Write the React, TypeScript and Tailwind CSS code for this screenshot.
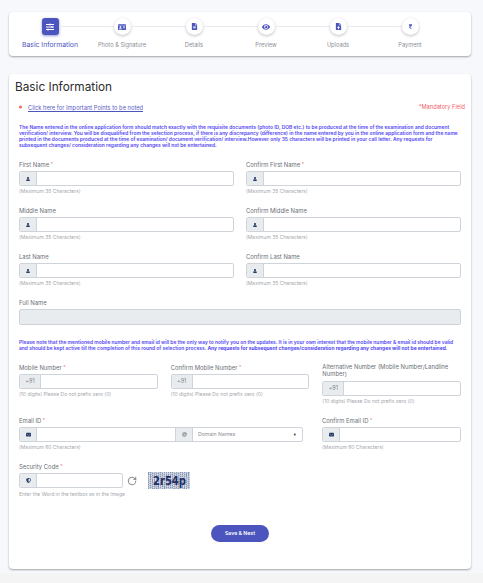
import { FaAt, FaEnvelope, FaEye, FaFileAlt, FaFileUpload, FaIdCard, FaRupeeSign, FaShieldAlt, FaSlidersH, FaUser } from "react-icons/fa";
import { RotateCw } from "lucide-react";
import type { ReactNode } from "react";

const steps = [
  { label: "Photo & Signature", icon: <FaIdCard className="w-[8px] h-[8px]" /> },
  { label: "Details", icon: <FaFileAlt className="w-[7px] h-[7px]" /> },
  { label: "Preview", icon: <FaEye className="w-[8px] h-[8px]" /> },
  { label: "Uploads", icon: <FaFileUpload className="w-[7px] h-[7px]" /> },
  { label: "Payment", icon: <FaRupeeSign className="w-[5px] h-[5px]" /> },
];

const Addon = ({ children, w = "w-[17px]" }: { children: ReactNode; w?: string }) => (
  <div className={`${w} shrink-0 h-full flex items-center justify-center bg-[#e9ecef] border-r border-[#ced4da] text-[#263a66] rounded-l-[2px]`}>
    {children}
  </div>
);

const Box = ({ children, className = "" }: { children?: ReactNode; className?: string }) => (
  <div className={`h-[15px] flex bg-white border border-[#ced4da] rounded-[2px] overflow-hidden ${className}`}>
    {children}
  </div>
);

const Label = ({ text, req }: { text: string; req?: boolean }) => (
  <div className="h-[9px] mb-[2px] text-[5.9px] leading-[9px] text-[#6b6f76]">
    {text}
    {req && <span className="text-[4.5px] text-[#f0524f] relative -top-[1.5px] ml-[1.5px]">*</span>}
  </div>
);

const Hint = ({ text }: { text: string }) => (
  <div className="mt-[2px] h-[7px] text-[5px] leading-[7px] text-[#a5a8ad]">{text}</div>
);

const NameField = ({ label, req }: { label: string; req?: boolean }) => (
  <div>
    <Label text={label} req={req} />
    <Box>
      <Addon>
        <FaUser className="w-[4px] h-[4px]" />
      </Addon>
    </Box>
    <Hint text="(Maximum 35 Characters)" />
  </div>
);

const PhoneField = ({ label, req }: { label: ReactNode; req?: boolean }) => (
  <div>
    {typeof label === "string" ? (
      <Label text={label} req={req} />
    ) : (
      <div className="h-[16px] mb-[2px] text-[5.9px] leading-[7px] text-[#6b6f76]">{label}</div>
    )}
    <Box>
      <Addon w="w-[21px]">
        <span className="text-[5.5px] text-[#80858c]">+91</span>
      </Addon>
    </Box>
    <Hint text="(10 digits) Please Do not prefix zero (0)" />
  </div>
);

// captcha noise, fixed seed so the picture stays the same
const noise = Array.from({ length: 420 }, (_, i) => ({
  x: (i * 37) % 42,
  y: (i * 13 + ((i * i) % 7)) % 17,
  dark: i % 2 === 0,
}));

const Captcha = () => (
  <svg width="42" height="17" viewBox="0 0 42 17" className="shrink-0">
    <rect width="42" height="17" fill="#b9c2d4" />
    {noise.map((d, i) => (
      <rect key={i} x={d.x} y={d.y} width="0.8" height="0.8" fill={d.dark ? "#6f7fa3" : "#e6e9f0"} />
    ))}
    <text x="5" y="13" fontFamily="'DejaVu Sans', sans-serif" fontWeight="700" fontSize="11.5" fill="#1f2f66" textLength="33" lengthAdjust="spacingAndGlyphs">
      2r54p
    </text>
  </svg>
);

export default function App() {
  return (
    <div className="h-[583px] overflow-hidden bg-[#f4f4f4] font-['Inter','Liberation_Sans',sans-serif]">
      <div className="h-[573px] bg-[#f6f8fb] pt-[12px] pl-[9px] pr-[12px]">
        {/* stepper */}
        <div className="h-[44px] bg-white rounded-[4px] shadow-[0_1px_2px_rgba(0,0,0,0.35)] pl-[5px] pt-[6px] flex">
          <div className="w-[72px] flex flex-col items-center">
            <div className="w-full h-[17px] flex items-center">
              <div className="flex-1" />
              <div className="w-[17px] h-[17px] rounded-[3px] bg-[#4b55bd] text-white flex items-center justify-center shadow-[0_1px_3px_rgba(75,85,189,0.6)]">
                <FaSlidersH className="w-[8px] h-[8px]" />
              </div>
              <div className="flex-1 h-px bg-[#e9ebef]" />
            </div>
            <div className="mt-[5px] text-[6.8px] leading-[9px] text-[#4b55bd] whitespace-nowrap">Basic Information</div>
          </div>
          {steps.map((s, i) => (
            <div key={s.label} className="w-[72px] flex flex-col items-center">
              <div className="w-full h-[17px] flex items-center">
                <div className="flex-1 h-px bg-[#e9ebef]" />
                <div className="w-[17px] h-[17px] rounded-full bg-white text-[#4b55bd] flex items-center justify-center shadow-[0_1px_3px_rgba(0,0,0,0.25)]">
                  {s.icon}
                </div>
                <div className={`flex-1 h-px ${i < steps.length - 1 ? "bg-[#e9ebef]" : ""}`} />
              </div>
              <div className="mt-[5px] text-[5.7px] leading-[9px] text-[#8d9096] whitespace-nowrap">{s.label}</div>
            </div>
          ))}
        </div>

        {/* form */}
        <div className="mt-[18px] h-[495px] bg-white rounded-[4px] shadow-[0_1px_2px_rgba(0,0,0,0.35)] px-[10px]">
          <h1 className="pt-[5px] -ml-[4px] h-[25px] text-[11.8px] leading-[16px] text-[#2b2b2b]">Basic Information</h1>
          <div className="h-[11px] mt-[3px] -mb-[1px] -mr-[4px] flex items-center justify-between">
            <div className="flex items-center">
              <div className="w-[3px] h-[3px] rounded-full bg-[#f26a5a] -translate-y-[0.5px]" />
              <a className="ml-[6px] text-[5.75px] leading-[7px] text-[#5a61c4] border-b border-[#4b55bd]">Click here for Important Points to be noted</a>
            </div>
            <span className="text-[5.7px] text-[#f4606a]">*Mandatory Field</span>
          </div>

          <p className="mt-[12px] h-[24px] text-[4.95px] leading-[6px] font-semibold text-[#5348f2]">
            The Name entered in the online application form should match exactly with the requisite documents (photo ID, DOB etc.) to be produced at the time of the examination and document
            verification/ interview. You will be disqualified from the selection process, if there is any discrepancy (difference) in the name entered by you in the online application form and the name
            printed in the documents produced at the time of examination/ document verification/ interview.However only 35 characters will be printed in your call letter. Any requests for
            subsequent changes/ consideration regarding any changes will not be entertained.
          </p>

          <div className="mt-[12px] grid grid-cols-2 gap-x-[12px] gap-y-[11px]">
            <NameField label="First Name" req />
            <NameField label="Confirm First Name" req />
            <NameField label="Middle Name" />
            <NameField label="Confirm Middle Name" />
            <NameField label="Last Name" />
            <NameField label="Confirm Last Name" />
          </div>

          <div className="mt-[11px]">
            <Label text="Full Name" />
            <div className="h-[16px] bg-[#e9ecef] border border-[#ced4da] rounded-[2px]" />
          </div>

          <p className="mt-[14px] h-[12px] text-[4.95px] leading-[6px] font-semibold text-[#5348f2]">
            Please note that the mentioned mobile number and email id will be the only way to notify you on the updates. It is in your own interest that the mobile number &amp; email id should be valid
            and should be kept active till the completion of this round of selection process. <b className="font-bold">Any requests for subsequent changes/consideration regarding any changes will not be entertained.</b>
          </p>

          <div className="mt-[12px] grid grid-cols-3 gap-x-[13px]">
            <PhoneField label="Mobile Number" req />
            <PhoneField label="Confirm Mobile Number" req />
            <PhoneField label={<>Alternative Number (Mobile Number/Landline<br />Number)</>} />
          </div>

          <div className="mt-[11px] flex gap-x-[19px]">
            <div className="w-[284px]">
              <Label text="Email ID" req />
              <Box>
                <Addon>
                  <FaEnvelope className="w-[5px] h-[5px]" />
                </Addon>
                <div className="flex-1" />
                <div className="w-[18px] shrink-0 h-full flex items-center justify-center bg-[#e9ecef] border-x border-[#ced4da] text-[#8a8f96]">
                  <FaAt className="w-[5px] h-[5px]" />
                </div>
                <div className="w-[109px] shrink-0 flex items-center justify-between pl-[5px] pr-[6px]">
                  <span className="text-[5.2px] text-[#8d9096]">Domain Names</span>
                  <span className="text-[5px] text-[#555]">♦</span>
                </div>
              </Box>
              <Hint text="(Maximum 60 Characters)" />
            </div>
            <div className="flex-1">
              <Label text="Confirm Email ID" req />
              <Box>
                <Addon>
                  <FaEnvelope className="w-[5px] h-[5px]" />
                </Addon>
              </Box>
              <Hint text="(Maximum 60 Characters)" />
            </div>
          </div>

          <div className="mt-[11px]">
            <div className="-mb-px">
              <Label text="Security Code" req />
            </div>
            <div className="flex items-center">
              <Box className="w-[104px]">
                <Addon>
                  <FaShieldAlt className="w-[5px] h-[5px]" />
                </Addon>
              </Box>
              <RotateCw className="ml-[4px] w-[10px] h-[10px] text-[#444]" strokeWidth={1.5} />
              <div className="ml-[11px]">
                <Captcha />
              </div>
            </div>
            <Hint text="Enter the Word in the textbox as in the Image" />
          </div>

          <div className="mt-[27px] flex justify-center">
            <button className="w-[58px] h-[17px] rounded-full bg-[#4b55bd] text-white text-[5.2px] font-semibold">Save &amp; Next</button>
          </div>
        </div>
      </div>
    </div>
  );
}
